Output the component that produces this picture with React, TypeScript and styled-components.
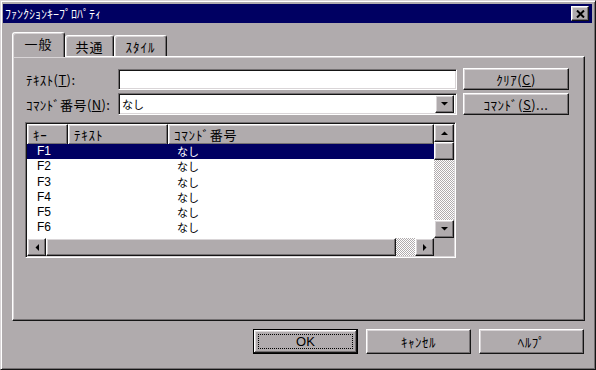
import React from 'react';
import styled, { createGlobalStyle, css } from 'styled-components';

const face = '#b0abad';
const shadow = '#747072';
const dark = '#151515';
const light = '#d9d5d7';
const navy = '#000062';

const GlobalStyle = createGlobalStyle`
  html, body {
    margin: 0;
    padding: 0;
    background: ${face};
  }
  body {
    font-family: "Noto Sans CJK JP", "Noto Sans", sans-serif;
    font-size: 12px;
    color: #000;
  }
  * {
    box-sizing: border-box;
  }
`;

const raised = css`
  border: 1px solid;
  border-color: #fff ${dark} ${dark} #fff;
  box-shadow: inset -1px -1px ${shadow}, inset 1px 1px ${light};
  background: ${face};
`;

const sunken = css`
  border: 1px solid;
  border-color: ${shadow} #fff #fff ${shadow};
  box-shadow: inset 1px 1px ${dark}, inset -1px -1px ${light};
`;

const dither = css`
  background: repeating-conic-gradient(#fff 0 25%, ${face} 0 50%) 0 0 / 2px 2px;
`;

type Dir = 'up' | 'down' | 'left' | 'right';

const Arrow: React.FC<{ dir: Dir }> = ({ dir }) => {
  const pts: Record<Dir, string> = {
    up: '0,4 7,4 3.5,0.5',
    down: '0,0 7,0 3.5,3.5',
    left: '4,0 4,7 0.5,3.5',
    right: '0,0 0,7 3.5,3.5'
  };
  const vertical = dir === 'up' || dir === 'down';
  return (
    <svg width={vertical ? 7 : 4} height={vertical ? 4 : 7} viewBox={vertical ? '0 0 7 4' : '0 0 4 7'}>
      <polygon points={pts[dir]} fill="#000" />
    </svg>
  );
};

const Key: React.FC<{ k: string }> = ({ k }) => <Mnemonic>{k}</Mnemonic>;

const rows = ['F1', 'F2', 'F3', 'F4', 'F5', 'F6'];

const App: React.FC = () => (
  <>
    <GlobalStyle />
    <Window>
      <TitleBar>
        <Title>ﾌｧﾝｸｼｮﾝｷｰﾌﾟﾛﾊﾟﾃｨ</Title>
        <CloseButton>
          <svg width="9" height="8" viewBox="0 0 9 8">
            <path d="M1 0.5 L8 7.5 M8 0.5 L1 7.5" stroke="#000" strokeWidth="2" />
          </svg>
        </CloseButton>
      </TitleBar>
      <Body>
        <Tabs>
          <Tab active width={53}>一般</Tab>
          <Tab width={49}>共通</Tab>
          <Tab width={53}>ｽﾀｲﾙ</Tab>
        </Tabs>
        <Panel>
          <Form>
            <Label>
              ﾃｷｽﾄ(<Key k="T" />):
            </Label>
            <TextField />
            <Button>
              ｸﾘｱ(<Key k="C" />)
            </Button>
            <Label>
              ｺﾏﾝﾄﾞ番号(<Key k="N" />):
            </Label>
            <Combo>
              <ComboValue>なし</ComboValue>
              <ComboButton>
                <Arrow dir="down" />
              </ComboButton>
            </Combo>
            <Button>
              ｺﾏﾝﾄﾞ(<Key k="S" />)...
            </Button>
          </Form>
          <ListView>
            <ListContent>
              <Header>
                <HeaderCell>ｷｰ</HeaderCell>
                <HeaderCell>ﾃｷｽﾄ</HeaderCell>
                <HeaderCell>ｺﾏﾝﾄﾞ番号</HeaderCell>
              </Header>
              {rows.map((r, i) => (
                <Row key={r} selected={i === 0}>
                  <KeyCell>{r}</KeyCell>
                  <span />
                  <CmdCell>なし</CmdCell>
                </Row>
              ))}
            </ListContent>
            <VScroll>
              <ScrollButton>
                <Arrow dir="up" />
              </ScrollButton>
              <Thumb />
              <Track />
              <ScrollButton>
                <Arrow dir="down" />
              </ScrollButton>
            </VScroll>
            <HScroll>
              <ScrollButton>
                <Arrow dir="left" />
              </ScrollButton>
              <Thumb />
              <HTrack />
              <ScrollButton>
                <Arrow dir="right" />
              </ScrollButton>
            </HScroll>
            <Corner />
          </ListView>
        </Panel>
        <Footer>
          <DefaultButton>
            <Focus>OK</Focus>
          </DefaultButton>
          <Button>ｷｬﾝｾﾙ</Button>
          <Button>ﾍﾙﾌﾟ</Button>
        </Footer>
      </Body>
    </Window>
  </>
);

export default App;

const Window = styled.div`
  width: 596px;
  height: 370px;
  border: 1px solid;
  border-color: ${light} ${dark} ${dark} ${light};
  box-shadow: inset 1px 1px #fff, inset -1px -1px ${shadow};
  padding: 3px 3px 0 2px;
  display: flex;
  flex-direction: column;
  background: ${face};
`;

const TitleBar = styled.div`
  height: 19px;
  background: ${navy};
  display: flex;
  align-items: center;
  justify-content: space-between;
  padding: 0 3px 0 2px;
`;

const Title = styled.span`
  color: #fff;
  font-size: 12px;
  line-height: 19px;
`;

const CloseButton = styled.div`
  ${raised};
  width: 18px;
  height: 15px;
  display: grid;
  place-items: center;
`;

const Body = styled.div`
  padding: 9px 7px 0 9px;
  display: flex;
  flex-direction: column;
`;

const Tabs = styled.div`
  height: 24px;
  display: flex;
  align-items: flex-end;
`;

const Tab = styled.div<{ active?: boolean; width: number }>`
  position: relative;
  width: ${(p) => p.width}px;
  height: ${(p) => (p.active ? 25 : 21)}px;
  margin-bottom: ${(p) => (p.active ? -1 : 0)}px;
  z-index: ${(p) => (p.active ? 1 : 0)};
  background: ${face};
  border: 1px solid;
  border-bottom: none;
  border-color: #fff ${dark} transparent #fff;
  border-radius: 3px 3px 0 0;
  box-shadow: inset -1px 0 ${shadow}, inset 1px 1px ${light};
  display: flex;
  align-items: center;
  justify-content: center;
  font-size: 13px;
  letter-spacing: 1px;
  padding-bottom: ${(p) => (p.active ? 3 : 0)}px;
`;

const Panel = styled.div`
  height: 265px;
  border: 1px solid;
  border-color: #fff ${dark} ${dark} #fff;
  box-shadow: inset -1px -1px ${shadow}, inset 1px 1px ${light};
  padding: 11px 12px 0 12px;
  display: flex;
  flex-direction: column;
`;

const Form = styled.div`
  display: grid;
  grid-template-columns: 87px 339px 106px;
  grid-auto-rows: 22px;
  column-gap: 6px;
  row-gap: 3px;
  align-items: center;
`;

const Label = styled.span`
  padding-left: 1px;
  font-size: 13px;
  letter-spacing: 0.4px;
  white-space: nowrap;
`;

const Mnemonic = styled.span`
  text-decoration: underline;
`;

const TextField = styled.div`
  ${sunken};
  height: 21px;
  background: #fff;
`;

const Combo = styled.div`
  ${sunken};
  height: 22px;
  background: #fff;
  display: flex;
  align-items: center;
  padding: 2px 2px 2px 3px;
`;

const ComboValue = styled.span`
  flex: 1;
  font-size: 11px;
`;

const ComboButton = styled.div`
  ${raised};
  width: 19px;
  height: 18px;
  display: grid;
  place-items: center;
`;

const Button = styled.div`
  ${raised};
  height: 22px;
  display: flex;
  align-items: center;
  justify-content: center;
  font-size: 13px;
  letter-spacing: 0.5px;
  white-space: nowrap;
`;

const ListView = styled.div`
  ${sunken};
  margin-top: 7px;
  width: 431px;
  height: 136px;
  padding: 1px;
  display: grid;
  grid-template-columns: 1fr 20px;
  grid-template-rows: 1fr 18px;
  background: #fff;
`;

const ListContent = styled.div`
  overflow: hidden;
  display: flex;
  flex-direction: column;
  font-size: 11px;
`;

const Header = styled.div`
  display: grid;
  grid-template-columns: 41px 100px 1fr;
  height: 20px;
  flex: none;
  font-size: 13px;
  letter-spacing: 0.8px;
`;

const HeaderCell = styled.div`
  ${raised};
  padding-left: 5px;
  display: flex;
  align-items: center;
  white-space: nowrap;
`;

const Row = styled.div<{ selected?: boolean }>`
  display: grid;
  grid-template-columns: 41px 100px 1fr;
  height: 15.3px;
  line-height: 15px;
  overflow: hidden;
  background: ${(p) => (p.selected ? navy : '#fff')};
  color: ${(p) => (p.selected ? '#fff' : '#000')};
`;

const KeyCell = styled.span`
  padding-left: 10px;
  font-family: "Liberation Sans", Arial, sans-serif;
  font-size: 12px;
`;

const CmdCell = styled.span`
  padding-left: 9px;
`;

const VScroll = styled.div`
  display: flex;
  flex-direction: column;
`;

const HScroll = styled.div`
  display: flex;
`;

const ScrollButton = styled.div`
  ${raised};
  flex: none;
  width: 20px;
  height: 18px;
  display: grid;
  place-items: center;
  ${HScroll} & {
    width: 19px;
  }
`;

const Thumb = styled.div`
  ${raised};
  flex: 0 0 18px;
  ${HScroll} & {
    flex: 1;
  }
`;

const Track = styled.div`
  ${dither};
  flex: 1;
`;

const HTrack = styled.div`
  ${dither};
  flex: 0 0 19px;
`;

const Corner = styled.div`
  background: ${face};
`;

const Footer = styled.div`
  margin-top: 8px;
  padding-right: 1px;
  display: flex;
  justify-content: flex-end;
  gap: 8px;
  & > * {
    width: 105px;
    height: 25px;
  }
`;

const DefaultButton = styled.div`
  border: 1px solid #000;
  background: ${face};
  display: flex;
  padding: 4px;
  box-shadow: inset -1px -1px ${dark}, inset 1px 1px #fff, inset -2px -2px ${shadow}, inset 2px 2px ${light};
  & > * {
    flex: 1;
  }
`;

const Focus = styled.div`
  border: 1px dotted #000;
  display: flex;
  align-items: center;
  justify-content: center;
  font-family: "Liberation Sans", Arial, sans-serif;
  font-size: 13px;
`;
